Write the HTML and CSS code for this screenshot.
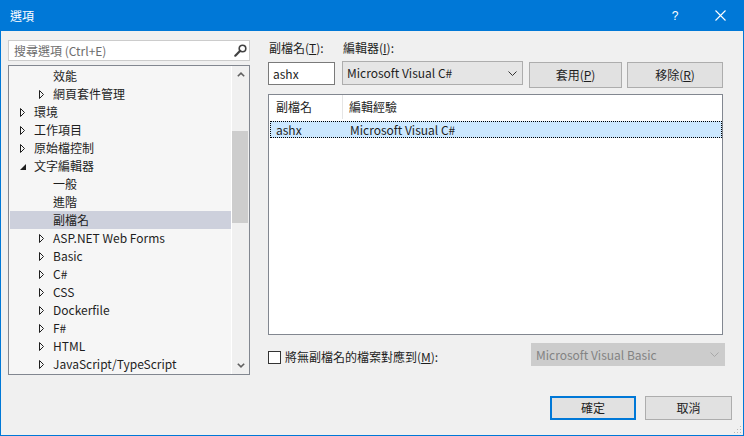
FILE: index.html
```html
<!DOCTYPE html>
<html lang="zh-Hant">
<head>
<meta charset="utf-8">
<title>選項</title>
<link rel="stylesheet" href="styles.css">
</head>
<body>
<div class="window">
  <div class="titlebar">
    <span class="title">選項</span>
    <span class="cap-btn help">?</span>
    <span class="cap-btn close">
      <svg width="11" height="11" viewBox="0 0 11 11"><path d="M0.5 0.5 L10.5 10.5 M10.5 0.5 L0.5 10.5" stroke="#fff" stroke-width="1.1" fill="none"/></svg>
    </span>
  </div>

  <div class="content">
    <div class="left">
      <div class="search">
        <span class="placeholder">搜尋選項 (Ctrl+E)</span>
        <svg class="search-icon" width="13" height="13" viewBox="0 0 13 13"><circle cx="8.5" cy="4.5" r="3.3" stroke="#424242" stroke-width="1.6" fill="none"/><path d="M6.2 6.8 L1.3 11.7" stroke="#424242" stroke-width="2.2" stroke-linecap="round"/></svg>
      </div>
      <div class="tree">
        <div class="tree-items">
          <div class="row l1"><span class="tw"></span><span>效能</span></div>
          <div class="row l1"><span class="tw"><svg width="6" height="9" viewBox="0 0 6 9"><path d="M0.5 0.5 L4.5 4.5 L0.5 8.5 Z" stroke="#1e1e1e" fill="none"/></svg></span><span>網頁套件管理</span></div>
          <div class="row l0"><span class="tw"><svg width="6" height="9" viewBox="0 0 6 9"><path d="M0.5 0.5 L4.5 4.5 L0.5 8.5 Z" stroke="#1e1e1e" fill="none"/></svg></span><span>環境</span></div>
          <div class="row l0"><span class="tw"><svg width="6" height="9" viewBox="0 0 6 9"><path d="M0.5 0.5 L4.5 4.5 L0.5 8.5 Z" stroke="#1e1e1e" fill="none"/></svg></span><span>工作項目</span></div>
          <div class="row l0"><span class="tw"><svg width="6" height="9" viewBox="0 0 6 9"><path d="M0.5 0.5 L4.5 4.5 L0.5 8.5 Z" stroke="#1e1e1e" fill="none"/></svg></span><span>原始檔控制</span></div>
          <div class="row l0"><span class="tw"><svg width="7" height="9" viewBox="0 0 7 9"><path d="M6 2 L6 8 L0 8 Z" fill="#1e1e1e"/></svg></span><span>文字編輯器</span></div>
          <div class="row l1"><span class="tw"></span><span>一般</span></div>
          <div class="row l1"><span class="tw"></span><span>進階</span></div>
          <div class="row l1 selected"><span class="tw"></span><span>副檔名</span></div>
          <div class="row l1"><span class="tw"><svg width="6" height="9" viewBox="0 0 6 9"><path d="M0.5 0.5 L4.5 4.5 L0.5 8.5 Z" stroke="#1e1e1e" fill="none"/></svg></span><span>ASP.NET Web Forms</span></div>
          <div class="row l1"><span class="tw"><svg width="6" height="9" viewBox="0 0 6 9"><path d="M0.5 0.5 L4.5 4.5 L0.5 8.5 Z" stroke="#1e1e1e" fill="none"/></svg></span><span>Basic</span></div>
          <div class="row l1"><span class="tw"><svg width="6" height="9" viewBox="0 0 6 9"><path d="M0.5 0.5 L4.5 4.5 L0.5 8.5 Z" stroke="#1e1e1e" fill="none"/></svg></span><span>C#</span></div>
          <div class="row l1"><span class="tw"><svg width="6" height="9" viewBox="0 0 6 9"><path d="M0.5 0.5 L4.5 4.5 L0.5 8.5 Z" stroke="#1e1e1e" fill="none"/></svg></span><span>CSS</span></div>
          <div class="row l1"><span class="tw"><svg width="6" height="9" viewBox="0 0 6 9"><path d="M0.5 0.5 L4.5 4.5 L0.5 8.5 Z" stroke="#1e1e1e" fill="none"/></svg></span><span>Dockerfile</span></div>
          <div class="row l1"><span class="tw"><svg width="6" height="9" viewBox="0 0 6 9"><path d="M0.5 0.5 L4.5 4.5 L0.5 8.5 Z" stroke="#1e1e1e" fill="none"/></svg></span><span>F#</span></div>
          <div class="row l1"><span class="tw"><svg width="6" height="9" viewBox="0 0 6 9"><path d="M0.5 0.5 L4.5 4.5 L0.5 8.5 Z" stroke="#1e1e1e" fill="none"/></svg></span><span>HTML</span></div>
          <div class="row l1"><span class="tw"><svg width="6" height="9" viewBox="0 0 6 9"><path d="M0.5 0.5 L4.5 4.5 L0.5 8.5 Z" stroke="#1e1e1e" fill="none"/></svg></span><span>JavaScript/TypeScript</span></div>
        </div>
        <div class="vscroll">
          <div class="sb-btn up"><svg width="8" height="5" viewBox="0 0 8 5"><path d="M0.8 4.3 L4 1.2 L7.2 4.3" stroke="#606060" stroke-width="1.6" fill="none"/></svg></div>
          <div class="sb-track"><div class="sb-thumb"></div></div>
          <div class="sb-btn down"><svg width="8" height="5" viewBox="0 0 8 5"><path d="M0.8 0.7 L4 3.8 L7.2 0.7" stroke="#606060" stroke-width="1.6" fill="none"/></svg></div>
        </div>
      </div>
    </div>

    <div class="right">
      <div class="labels">
        <span class="lbl lbl-ext">副檔名(<u>T</u>):</span>
        <span class="lbl">編輯器(<u>I</u>):</span>
      </div>
      <div class="controls">
        <div class="textbox">ashx</div>
        <div class="combo">
          <span>Microsoft Visual C#</span>
          <svg width="9" height="5" viewBox="0 0 9 5"><path d="M0.5 0.5 L4.5 4.5 L8.5 0.5" stroke="#333" fill="none"/></svg>
        </div>
        <div class="btn btn-apply">套用(<u>P</u>)</div>
        <div class="btn btn-remove">移除(<u>R</u>)</div>
      </div>
      <div class="listview">
        <div class="lv-header">
          <div class="col c1">副檔名</div>
          <div class="col c2">編輯經驗</div>
        </div>
        <div class="lv-row selected">
          <div class="col c1">ashx</div>
          <div class="col c2">Microsoft Visual C#</div>
        </div>
      </div>
      <div class="bottom-row">
        <div class="check">
          <span class="box"></span>
          <span class="check-label">將無副檔名的檔案對應到(<u>M</u>):</span>
        </div>
        <div class="combo disabled">
          <span>Microsoft Visual Basic</span>
          <svg width="9" height="5" viewBox="0 0 9 5"><path d="M0.5 0.5 L4.5 4.5 L8.5 0.5" stroke="#a8a8a8" fill="none"/></svg>
        </div>
      </div>
    </div>
  </div>

  <div class="footer">
    <div class="btn btn-ok">確定</div>
    <div class="btn btn-cancel">取消</div>
  </div>

  <svg class="grip" width="9" height="9" viewBox="0 0 9 9">
    <rect x="7" y="1" width="1" height="1" fill="#b8b8b8"/>
    <rect x="4" y="4" width="1" height="1" fill="#b8b8b8"/>
    <rect x="7" y="4" width="1" height="1" fill="#b8b8b8"/>
    <rect x="1" y="7" width="1" height="1" fill="#b8b8b8"/>
    <rect x="4" y="7" width="1" height="1" fill="#b8b8b8"/>
    <rect x="7" y="7" width="1" height="1" fill="#b8b8b8"/>
  </svg>
</div>
</body>
</html>
```

FILE: styles.css
```css
* { box-sizing: border-box; }

html, body {
  margin: 0;
  padding: 0;
  background: #f0f0f0;
}

body {
  font-family: "Noto Sans CJK TC", "Noto Sans", sans-serif;
  font-size: 12px;
  color: #1e1e1e;
}

u { text-decoration: underline; text-underline-offset: 1px; }

.window {
  position: relative;
  width: 744px;
  height: 436px;
  border: 1px solid #0078d7;
  border-top: none;
  background: #f0f0f0;
  display: flex;
  flex-direction: column;
}

/* title bar */
.titlebar {
  height: 31px;
  background: #0078d7;
  color: #fff;
  display: flex;
  align-items: center;
  flex-shrink: 0;
}
.title {
  padding-left: 9px;
  line-height: 16px;
  font-size: 12px;
}
.cap-btn {
  display: flex;
  align-items: center;
  justify-content: center;
  height: 31px;
}
.help {
  margin-left: auto;
  width: 44px;
  font-family: "Liberation Sans", sans-serif;
  font-size: 12px;
}
.close { width: 46px; }

/* content */
.content {
  height: 344px;
  display: flex;
  padding: 9px 0 0 7px;
  flex-shrink: 0;
}

.left {
  width: 242px;
  display: flex;
  flex-direction: column;
}

.search {
  height: 21px;
  background: #fff;
  border: 1px solid #cccccc;
  display: flex;
  align-items: center;
  padding-left: 5px;
  padding-right: 2px;
}
.placeholder {
  color: #6d6d6d;
  line-height: 16px;
}
.search-icon { margin-left: auto; }

.tree {
  margin-top: 4px;
  height: 310px;
  border: 1px solid #828790;
  background: #f6f6f6;
  display: flex;
}
.tree-items {
  width: 222px;
  padding: 1px 0 0 1px;
}
.row {
  height: 18px;
  display: flex;
  align-items: center;
  line-height: 18px;
  white-space: nowrap;
}
.row.l0 { padding-left: 10px; }
.row.l1 { padding-left: 29px; }
.row.selected { background: #cdd0dc; }
.tw {
  width: 14px;
  height: 18px;
  display: flex;
  align-items: center;
  flex-shrink: 0;
}

.vscroll {
  width: 18px;
  border-left: 1px solid #ffffff;
  background: #f0f0f0;
  display: flex;
  flex-direction: column;
}
.sb-btn {
  height: 17px;
  display: flex;
  align-items: center;
  justify-content: center;
}
.sb-track {
  flex: 1;
  padding: 0 1px 0 0;
}
.sb-thumb {
  margin-top: 48px;
  height: 92px;
  background: #cdcdcd;
}

/* right column */
.right {
  margin-left: 18px;
  width: 457px;
  display: flex;
  flex-direction: column;
}
.labels {
  display: flex;
  height: 16px;
  line-height: 16px;
}
.lbl-ext {
  width: 75px;
  padding-left: 1px;
}
.controls {
  margin-top: 5px;
  display: flex;
  align-items: flex-start;
  height: 27px;
}
.textbox {
  margin-top: 1px;
  width: 67px;
  height: 23px;
  border: 1px solid #7a7a7a;
  background: #fff;
  padding-left: 4px;
  line-height: 21px;
}
.combo {
  margin-left: 7px;
  width: 181px;
  height: 24px;
  background: #e5e5e5;
  border: 1px solid #adadad;
  display: flex;
  align-items: center;
  justify-content: space-between;
  padding: 0 5px 0 4px;
  line-height: 16px;
}
.btn {
  display: flex;
  align-items: center;
  justify-content: center;
  background: #e1e1e1;
  border: 1px solid #adadad;
  line-height: 16px;
}
.btn-apply {
  margin-top: 1px;
  margin-left: 6px;
  width: 93px;
  height: 26px;
}
.btn-remove {
  margin-top: 1px;
  margin-left: 5px;
  width: 96px;
  height: 26px;
}

.listview {
  margin-top: 6px;
  width: 455px;
  height: 241px;
  border: 1px solid #828790;
  background: #fff;
}
.lv-header {
  display: flex;
  height: 24px;
  align-items: stretch;
}
.lv-header .c1 {
  border-right: 1px solid #e5e5e5;
}
.col {
  display: flex;
  align-items: center;
  line-height: 16px;
  white-space: nowrap;
}
.c1 { width: 74px; padding-left: 7px; }
.c2 { padding-left: 6px; }
.lv-row {
  margin: 2px 0 0 1px;
  height: 17px;
  display: flex;
}
.lv-row .c1 { width: 73px; padding-left: 6px; }
.lv-row .c2 { padding-left: 7px; }
.lv-row.selected {
  background: #cce8ff;
  outline: 1px dotted #000;
  outline-offset: -1px;
}

.bottom-row {
  margin-top: 8px;
  display: flex;
  justify-content: space-between;
  align-items: flex-start;
}
.check {
  display: flex;
  align-items: flex-start;
}
.box {
  margin-top: 8px;
  width: 13px;
  height: 13px;
  border: 1px solid #333;
  background: #fff;
}
.check-label {
  margin-top: 6px;
  margin-left: 4px;
  line-height: 16px;
}
.combo.disabled {
  width: 194px;
  height: 23px;
  background: #cccccc;
  border-color: #cccccc;
  color: #838383;
}

/* footer */
.footer {
  margin-top: 21px;
  display: flex;
  justify-content: flex-end;
  padding-right: 11px;
}
.btn-ok {
  width: 86px;
  height: 24px;
  border: 2px solid #0078d7;
}
.btn-cancel {
  margin-left: 9px;
  width: 87px;
  height: 24px;
}

.grip {
  position: absolute;
  right: 1px;
  bottom: 1px;
}
```
